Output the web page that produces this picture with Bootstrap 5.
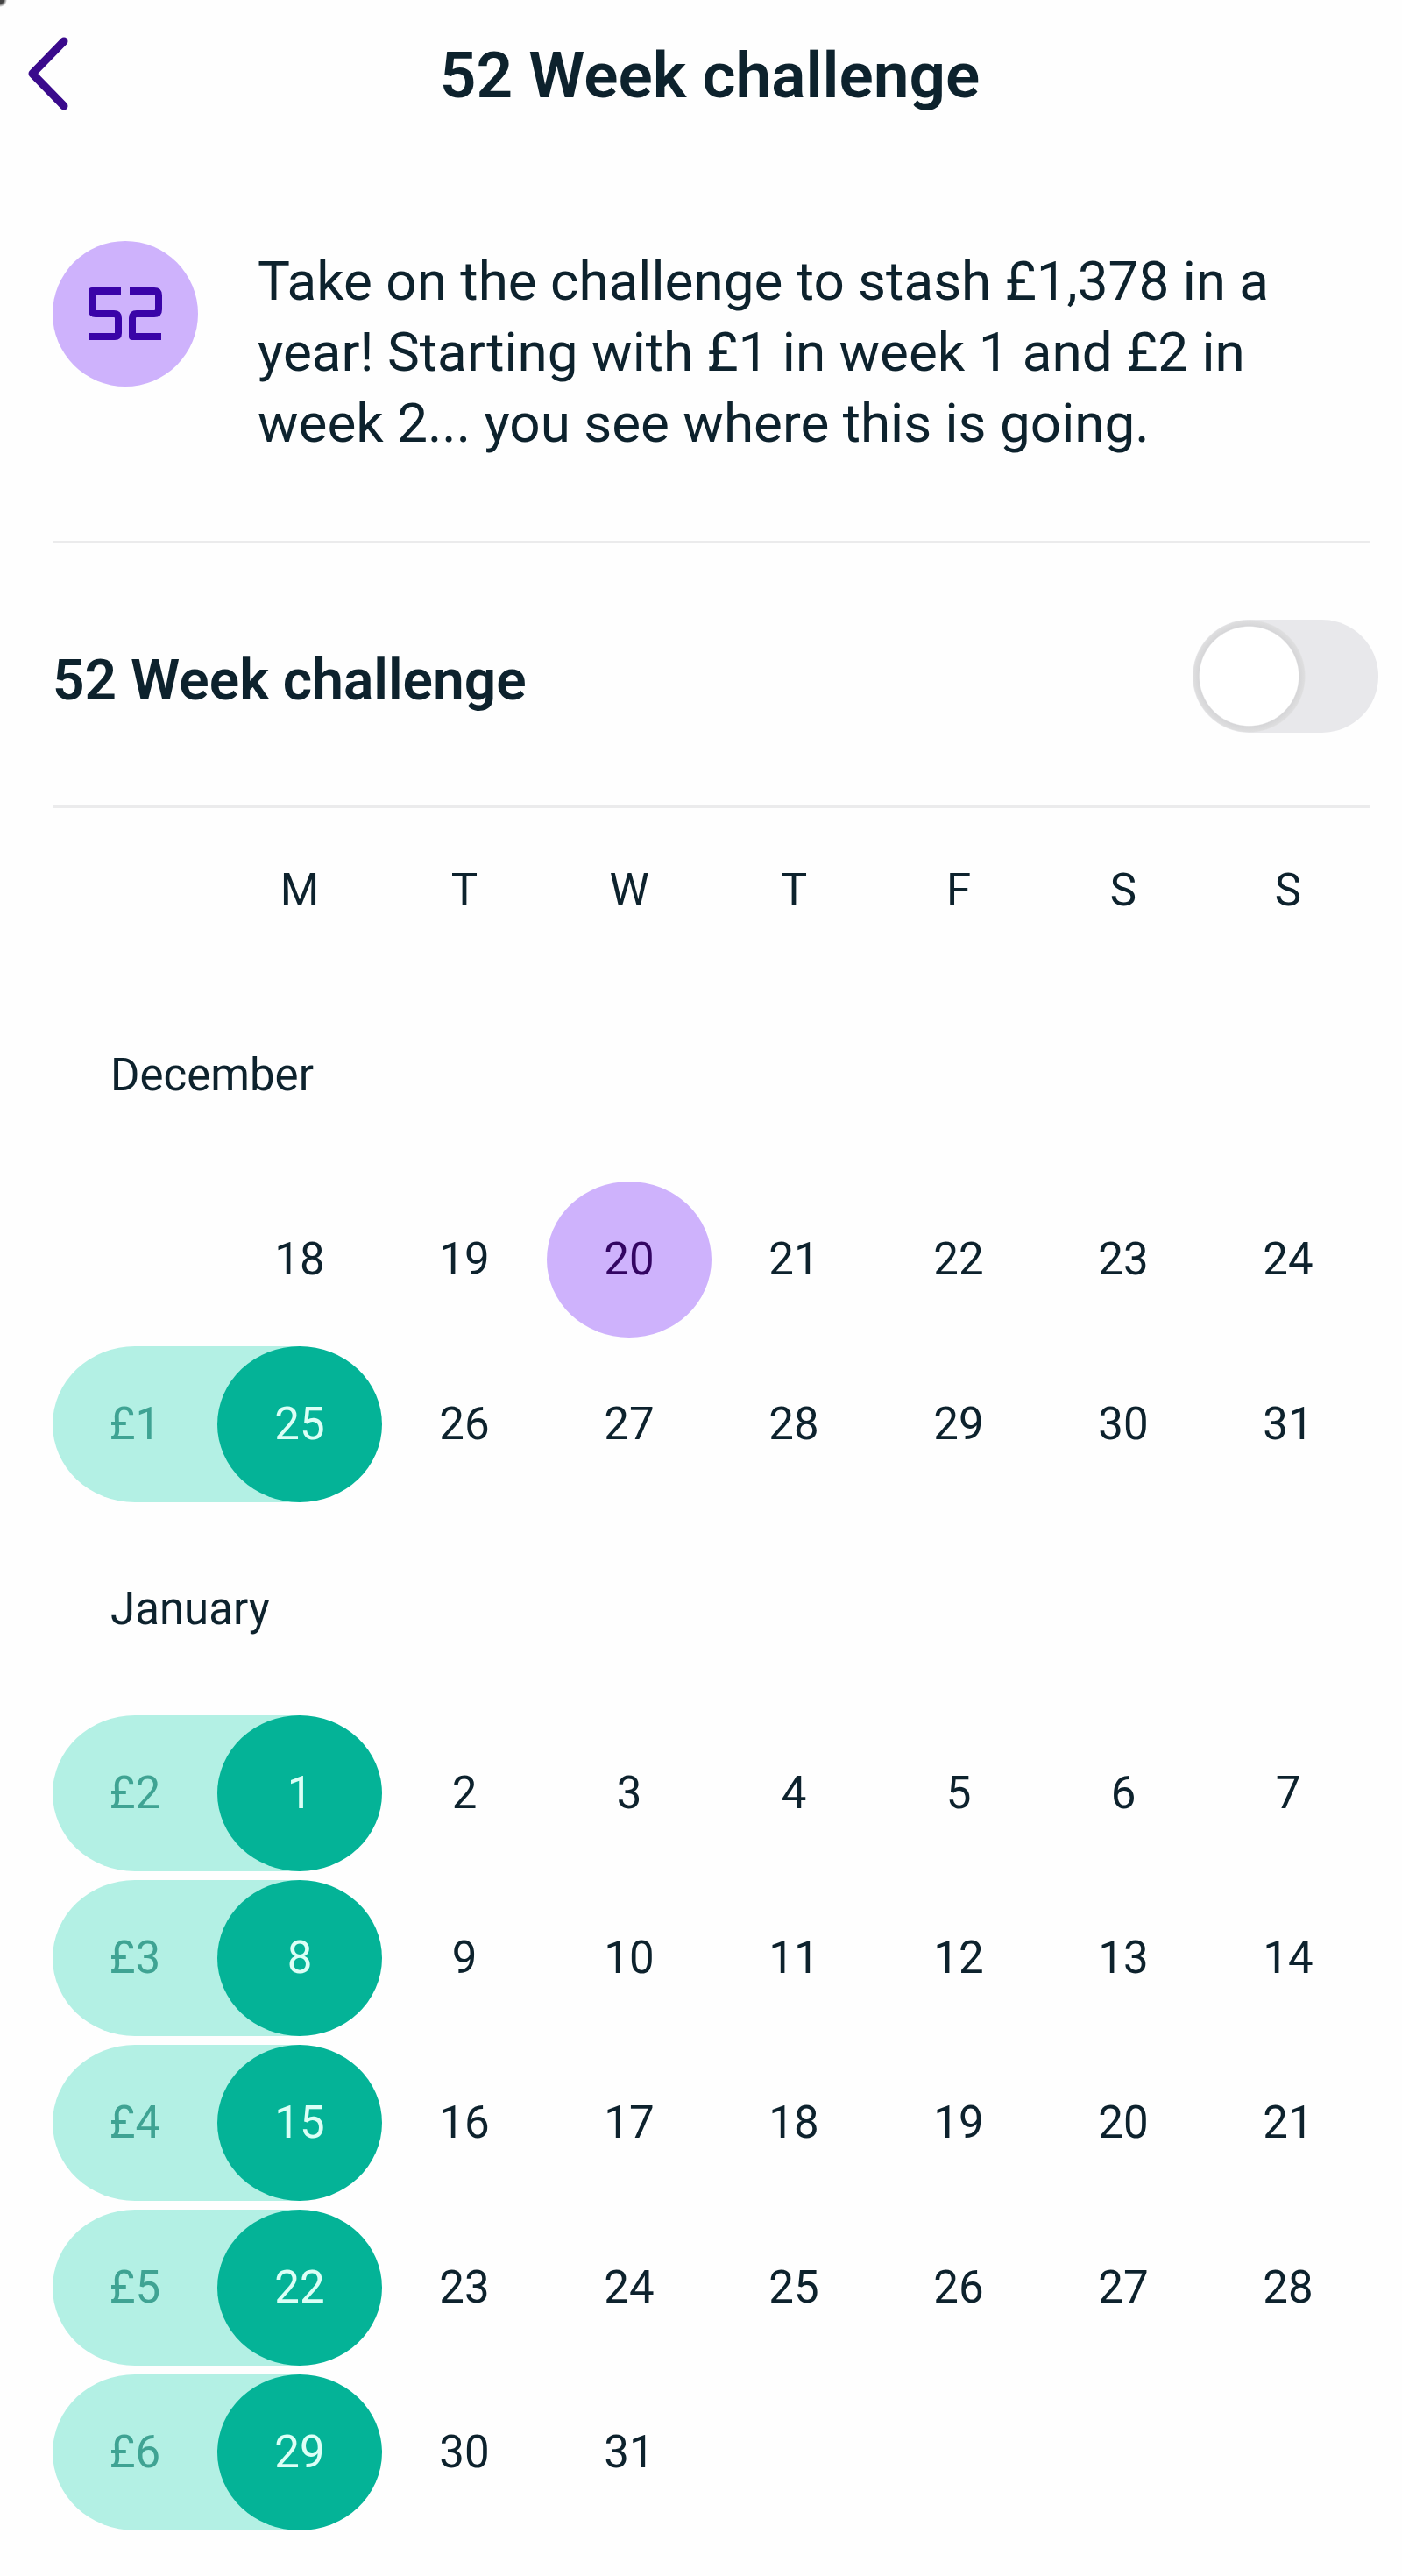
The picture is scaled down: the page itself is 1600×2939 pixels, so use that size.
<!DOCTYPE html>
<html lang="en">
<head>
<meta charset="utf-8">
<meta name="viewport" content="width=device-width, initial-scale=1">
<title>52 Week challenge</title>
<link href="https://cdn.jsdelivr.net/npm/bootstrap@5.3.0/dist/css/bootstrap.min.css" rel="stylesheet">
<style>
  :root { --ink: #0d222d; --violet: #ceb2fc; --indigo: #3a04a8; --mint: #b3f0e4; --teal: #04b397; --rule: #ebebec; }
  body { font-family: Roboto, "Liberation Sans", sans-serif; color: var(--ink); background: #fefefe; }
  .screen { padding: 0 36px 48px 60px; }
  .top-bar { display: grid; grid-template-columns: 80px 1fr 80px; height: 172px; padding: 0 0 0 20px;
    background: radial-gradient(circle at 0 0, #444 0 4px, transparent 8px); }
  .back-link { width: 76px; height: 100px; }
  .screen-title { font-size: 73px; line-height: 84px; font-weight: 600; }
  .intro { height: 448px; padding-top: 103px; gap: 68px; border-bottom: 3px solid var(--rule); }
  .week-icon { width: 166px; height: 166px; background: var(--violet); }
  .intro-text { font-size: 62px; line-height: 81px; padding-top: 5px; max-width: 1240px; }
  .toggle-row { height: 302px; padding-top: 4px; border-bottom: 3px solid var(--rule); }
  .toggle-label { font-size: 64px; line-height: 72px; padding-top: 10px; font-weight: 600; }
  .toggle-row .form-check-input {
    width: 212px; height: 129px; margin: 0 -9px 0 0; border: 0; border-radius: 65px; background-color: #e8e8eb;
    background-image: radial-gradient(circle closest-side, #fff 0 87%, #d6d6d8 89%, #dededf 98%, transparent 100%);
    background-size: 129px 129px; background-position: left center; background-repeat: no-repeat; }
  .calendar { width: 100%; table-layout: fixed; border-collapse: collapse; font-size: 51px; line-height: 66px; text-align: center; }
  .calendar th { font-weight: 400; }
  .calendar tr { height: 188px; }
  .calendar tr.month-row { height: 233px; }
  .month-row th { text-align: left; padding-left: 66px; }
  .calendar td { padding: 0; }
  .slot { height: 178px; display: flex; align-items: center; justify-content: center; }
  .today { background: var(--violet); border-radius: 50%; color: #330562; }
  .amount { background: var(--mint); border-radius: 94px 0 0 94px / 89px 0 0 89px; color: #3fa393; }
  .pay-slot { background: linear-gradient(90deg, var(--mint) 50%, transparent 50%); }
  .pay-slot .slot { background: var(--teal); border-radius: 50%; color: #dcfff6; }
</style>
<script src="https://cdn.jsdelivr.net/npm/bootstrap@5.3.0/dist/js/bootstrap.bundle.min.js"></script>
</head>
<body>
<header class="top-bar align-items-center">
  <a href="#" class="back-link d-flex align-items-center" aria-label="Back">
    <svg width="76" height="88" viewBox="0 0 76 88" fill="none" stroke="#3a0a8c" stroke-width="9" stroke-linecap="round" stroke-linejoin="round"><path d="M53 5 17 42 53 79"/></svg>
  </a>
  <h1 class="screen-title text-center mb-0">52 Week challenge</h1>
</header>
<main class="screen">
  <section class="intro d-flex align-items-start">
    <div class="week-icon rounded-circle flex-shrink-0 d-flex align-items-center justify-content-center">
      <svg width="86" height="62" viewBox="0 0 86 62" fill="none" stroke="#3a04a8" stroke-width="8" stroke-linejoin="round" role="img" aria-label="52"><path d="M38 5H5V27Q5 31 9 31H30Q35 31 35 36V53Q35 57 31 57H2"/><path d="M48 5H76Q81 5 81 10V26Q81 31 76 31H56Q51 31 51 36V57H84"/></svg>
    </div>
    <p class="intro-text mb-0">Take on the challenge to stash £1,378 in a year! Starting with £1 in week 1 and £2 in week 2... you see where this is going.</p>
  </section>
  <section class="toggle-row d-flex align-items-center justify-content-between">
    <label class="toggle-label" for="challenge">52 Week challenge</label>
    <input class="form-check-input" type="checkbox" role="switch" id="challenge">
  </section>
  <table class="calendar">
    <thead>
      <tr><td></td><th scope="col">M</th><th scope="col">T</th><th scope="col">W</th><th scope="col">T</th><th scope="col">F</th><th scope="col">S</th><th scope="col">S</th></tr>
    </thead>
    <tbody>
      <tr class="month-row"><th colspan="8" scope="rowgroup">December</th></tr>
      <tr><td></td><td>18</td><td>19</td><td><div class="slot today">20</div></td><td>21</td><td>22</td><td>23</td><td>24</td></tr>
      <tr><td><div class="slot amount">£1</div></td><td><div class="pay-slot"><div class="slot">25</div></div></td><td>26</td><td>27</td><td>28</td><td>29</td><td>30</td><td>31</td></tr>
    </tbody>
    <tbody>
      <tr class="month-row"><th colspan="8" scope="rowgroup">January</th></tr>
      <tr><td><div class="slot amount">£2</div></td><td><div class="pay-slot"><div class="slot">1</div></div></td><td>2</td><td>3</td><td>4</td><td>5</td><td>6</td><td>7</td></tr>
      <tr><td><div class="slot amount">£3</div></td><td><div class="pay-slot"><div class="slot">8</div></div></td><td>9</td><td>10</td><td>11</td><td>12</td><td>13</td><td>14</td></tr>
      <tr><td><div class="slot amount">£4</div></td><td><div class="pay-slot"><div class="slot">15</div></div></td><td>16</td><td>17</td><td>18</td><td>19</td><td>20</td><td>21</td></tr>
      <tr><td><div class="slot amount">£5</div></td><td><div class="pay-slot"><div class="slot">22</div></div></td><td>23</td><td>24</td><td>25</td><td>26</td><td>27</td><td>28</td></tr>
      <tr><td><div class="slot amount">£6</div></td><td><div class="pay-slot"><div class="slot">29</div></div></td><td>30</td><td>31</td><td></td><td></td><td></td><td></td></tr>
    </tbody>
  </table>
</main>
</body>
</html>
